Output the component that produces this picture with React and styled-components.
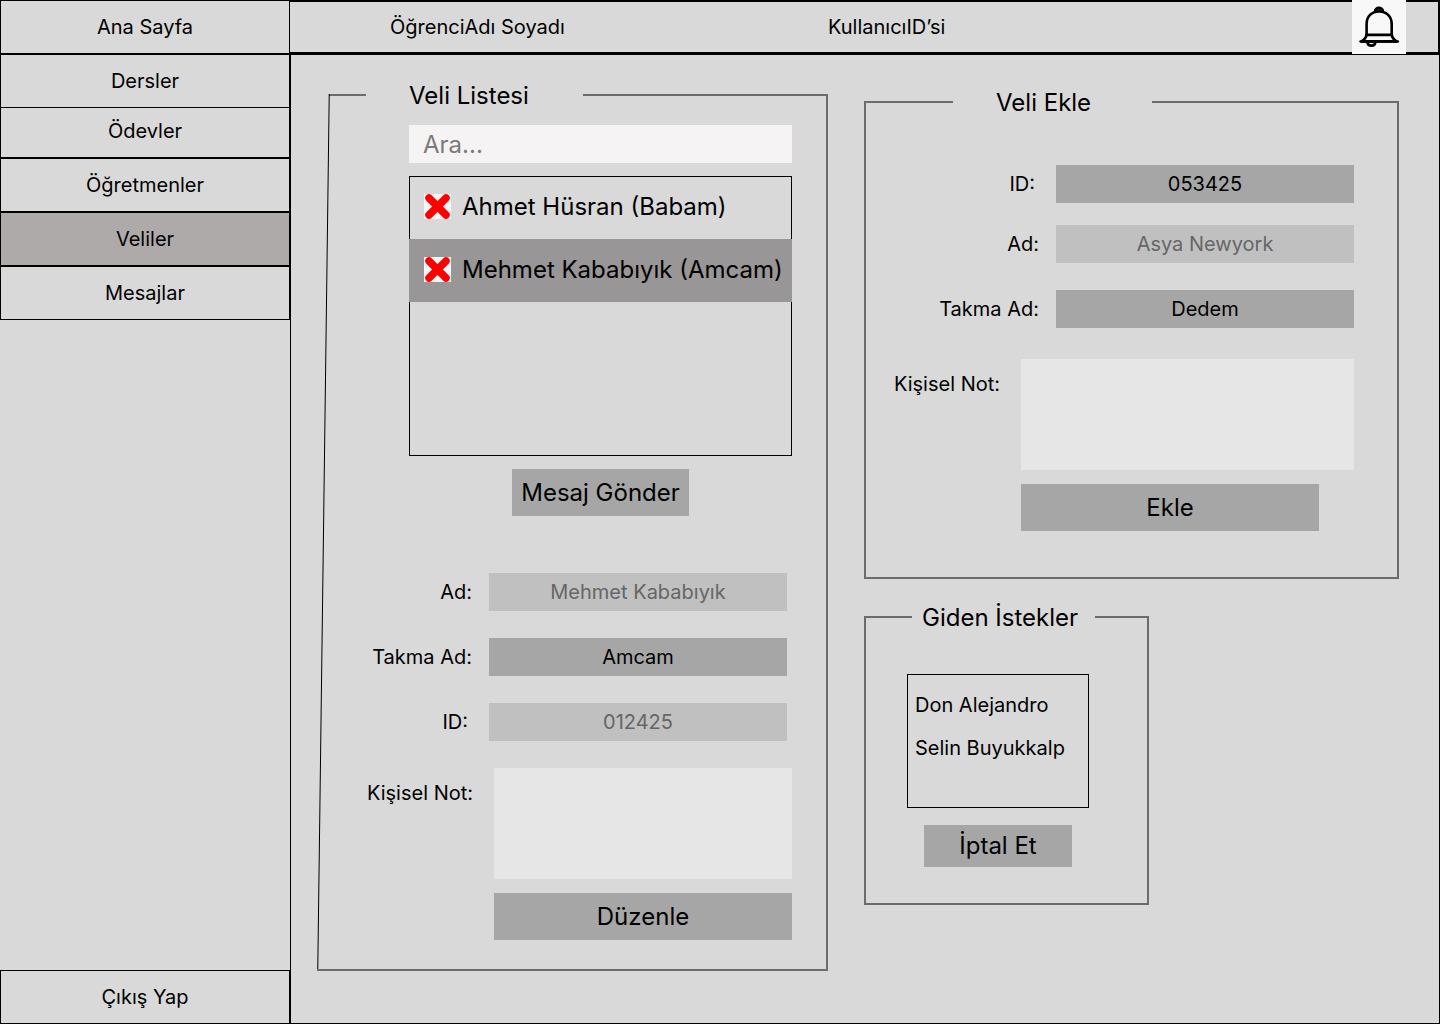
import React from "react";
import styled, { createGlobalStyle, css } from "styled-components";

const ink = "#000000";
const surface = "#d9d9d9";
const frameLine = "#6c6c6c";
const control = "#a6a6a6";
const controlMuted = "#c0c0c0";

const GlobalStyle = createGlobalStyle`
  *, *::before, *::after { box-sizing: border-box; }
  body {
    margin: 0;
    background: ${surface};
    color: ${ink};
    font-family: Inter, "Liberation Sans", sans-serif;
    font-size: 20px;
    line-height: 24px;
  }
  button, input, textarea {
    font: inherit;
    color: inherit;
    border: 0;
    border-radius: 0;
    margin: 0;
    padding: 0;
  }
  button { cursor: pointer; }
  ul { list-style: none; margin: 0; padding: 0; }
`;

const Page = styled.div`
  display: grid;
  grid-template-columns: 290px minmax(0, 1fr);
  min-height: 100vh;
`;

const Sidebar = styled.nav`
  display: flex;
  flex-direction: column;
  justify-content: space-between;
`;

const Menu = styled.ul`
  display: flex;
  flex-direction: column;
`;

const MenuItem = styled.li`
  /* The third entry is tucked under the second one. */
  &:nth-child(2) { z-index: 1; }
  &:nth-child(3) { margin-top: -4px; }
`;

const MenuLink = styled.a`
  display: flex;
  align-items: center;
  justify-content: center;
  height: 54px;
  border: 1px solid ${ink};
  background: ${(p) => (p.$active ? "#aeaaa9" : surface)};
  color: ${ink};
  text-decoration: none;
`;

const Workspace = styled.div`
  display: flex;
  flex-direction: column;
  min-width: 0;
`;

const TopBar = styled.header`
  display: grid;
  grid-template-columns: 438fr 524fr 54px;
  align-items: center;
  height: 55px;
  padding: 0 32px 0 100px;
  border: solid ${ink};
  border-width: 2px 2px 3px 0;
`;

const BellButton = styled.button`
  display: block;
  width: 54px;
  height: 54px;
  margin: -2px 0;
  background: #f8f8f8;
  svg { display: block; }
`;

const Content = styled.main`
  flex: 1;
  display: grid;
  grid-template-columns: minmax(0, 511fr) minmax(0, 535fr);
  align-items: start;
  gap: 36px;
  padding: 39px 40px 20px 26px;
  border: solid ${ink};
  border-width: 0 1px 1px 1px;
`;

const SideColumn = styled.div`
  display: flex;
  flex-direction: column;
  align-items: flex-start;
  gap: 37px;
  padding-top: 7px;
`;

const Frame = styled.section`
  position: relative;
  width: ${(p) => p.$width || "100%"};
  border: solid ${frameLine};
  border-width: 0 2px 2px ${(p) => (p.$slanted ? 0 : "2px")};

  ${(p) =>
    p.$slanted &&
    css`
      &::before {
        content: "";
        position: absolute;
        top: 0;
        bottom: 0;
        left: 6px;
        border-left: 1px solid ${ink};
        transform: skewX(-0.75deg);
        pointer-events: none;
      }
    `}
`;

const FrameHeader = styled.header`
  display: grid;
  grid-template-columns: ${(p) => p.$line}px ${(p) => p.$gap}px minmax(0, 1fr);
  align-items: center;
  height: 28px;
  margin-top: -13px;
  padding-left: ${(p) => (p.$slanted ? 12 : 0)}px;

  &::before, &::after {
    content: "";
    height: 2px;
    background: ${frameLine};
  }
`;

const FrameTitle = styled.h2`
  margin: 0;
  padding: 2px 0 0 ${(p) => p.$indent}px;
  font-size: 24px;
  font-weight: 400;
  line-height: 26px;
  white-space: nowrap;
`;

const FrameBody = styled.div`
  padding: ${(p) => p.$pad};
`;

const Picker = styled.div`
  display: flex;
  flex-direction: column;
  align-items: center;
  gap: 13px;
  padding-left: 92px;
`;

const SearchInput = styled.input`
  width: 100%;
  height: 38px;
  padding: 0 14px;
  background: #f5f3f4;
  font-size: 24px;
  &::placeholder { color: #7b7a7a; opacity: 1; }
`;

const ParentList = styled.ul`
  width: 100%;
  height: 280px;
  border: 1px solid ${ink};
`;

const ParentRow = styled.li`
  display: flex;
  align-items: center;
  gap: 11px;
  height: 63px;
  margin: 0 -1px;
  padding: 0 0 2px 15px;
  background: ${(p) => (p.$selected ? "#999697" : "transparent")};
  font-size: 24px;
  white-space: nowrap;
  &:first-child { margin-top: -1px; }
`;

const RemoveButton = styled.button`
  flex: none;
  width: 27px;
  height: 25px;
  background: #f6f6f6;
  svg { display: block; }
`;

const ActionButton = styled.button`
  width: ${(p) => p.$width}px;
  max-width: 100%;
  height: ${(p) => p.$height || 47}px;
  background: ${control};
  font-size: 24px;
  white-space: nowrap;
`;

const Form = styled.form`
  display: flex;
  flex-direction: column;
  margin-top: ${(p) => p.$top || 0}px;
`;

const FieldRow = styled.div`
  display: grid;
  grid-template-columns: ${(p) => p.$label}px minmax(0, 1fr);
  align-items: center;
  column-gap: 16px;
  margin-bottom: ${(p) => p.$after || 27}px;
  padding-right: ${(p) => p.$end || 0}px;
`;

const FieldLabel = styled.label`
  padding-right: ${(p) => p.$inset || 1}px;
  text-align: right;
  white-space: nowrap;
`;

const TextField = styled.input`
  width: 100%;
  height: 38px;
  text-align: center;
  background: ${control};
  &:disabled { background: ${controlMuted}; color: #666666; }
`;

const NoteGrid = styled.div`
  display: grid;
  grid-template-columns: ${(p) => p.$label}px minmax(0, 1fr);
  gap: 14px 20px;
  ${ActionButton} { grid-column: 2; }
`;

const NoteLabel = styled(FieldLabel)`
  padding-top: 13px;
`;

const NoteField = styled.textarea`
  display: block;
  width: 100%;
  height: 111px;
  padding: 8px;
  background: #e6e6e6;
  resize: none;
`;

const Requests = styled.div`
  display: flex;
  flex-direction: column;
  align-items: center;
  gap: 17px;
`;

const RequestList = styled.ul`
  width: 100%;
  height: 134px;
  padding: 9px 7px;
  border: 1px solid ${ink};
  line-height: 43px;
  white-space: nowrap;
`;

function BellIcon() {
  return (
    <svg width="54" height="54" viewBox="0 0 54 54" fill="none" stroke="#000" strokeWidth="2.6" strokeLinecap="round" strokeLinejoin="round" aria-hidden="true">
      <path d="M23 11.5a4 3.6 0 0 1 8 0" fill="#333" />
      <path d="M14.6 34.5V24c0-7.6 5-12.5 12.4-12.5S39.7 16.4 39.7 24v10.5c.3 3 2 5.200 5 6.900H9.400c3-1.700 4.900-3.900 5.200-6.900z" />
      <path d="M14.600 34.900h25.200" />
      <path d="M8.600 41.500h37.200" />
      <path d="M15.400 42.500c.6 4.200 7.400 4.200 8 0" />
    </svg>
  );
}

function CrossIcon() {
  return (
    <svg width="27" height="25" viewBox="0 0 27 25" fill="none" stroke="#ff0000" strokeWidth="7.5" strokeLinecap="round" aria-hidden="true">
      <path d="M5 4l17 17M22 4L5 21" />
    </svg>
  );
}

function Field({ id, label, value, disabled, ...layout }) {
  return (
    <FieldRow $label={layout.labelWidth} $after={layout.after} $end={layout.end}>
      <FieldLabel htmlFor={id} $inset={layout.inset}>{label}</FieldLabel>
      <TextField id={id} defaultValue={value} disabled={disabled} />
    </FieldRow>
  );
}

function Note({ id, labelWidth, action }) {
  return (
    <NoteGrid $label={labelWidth}>
      <NoteLabel htmlFor={id}>Kişisel Not:</NoteLabel>
      <NoteField id={id} />
      <ActionButton type="button" $width={298}>{action}</ActionButton>
    </NoteGrid>
  );
}

const menu = ["Ana Sayfa", "Dersler", "Ödevler", "Öğretmenler", "Veliler", "Mesajlar"];
const parents = [
  { name: "Ahmet Hüsran (Babam)" },
  { name: "Mehmet Kababıyık (Amcam)", selected: true },
];

export default function App() {
  return (
    <>
      <GlobalStyle />
      <Page lang="tr">
        <Sidebar>
          <Menu>
            {menu.map((name) => (
              <MenuItem key={name}>
                <MenuLink href="#" $active={name === "Veliler"}>{name}</MenuLink>
              </MenuItem>
            ))}
          </Menu>
          <MenuLink href="#">Çıkış Yap</MenuLink>
        </Sidebar>

        <Workspace>
          <TopBar>
            <span>ÖğrenciAdı Soyadı</span>
            <span>KullanıcıID’si</span>
            <BellButton type="button" aria-label="Bildirimler"><BellIcon /></BellButton>
          </TopBar>

          <Content>
            <Frame $slanted>
              <FrameHeader $line={37} $gap={217} $slanted>
                <FrameTitle $indent={43}>Veli Listesi</FrameTitle>
              </FrameHeader>
              <FrameBody $pad="16px 34px 29px 0">
                <Picker>
                  <SearchInput type="text" placeholder="Ara..." aria-label="Ara" />
                  <ParentList>
                    {parents.map((p) => (
                      <ParentRow key={p.name} $selected={p.selected}>
                        <RemoveButton type="button" aria-label="Sil"><CrossIcon /></RemoveButton>
                        <span>{p.name}</span>
                      </ParentRow>
                    ))}
                  </ParentList>
                  <ActionButton type="button" $width={177}>Mesaj Gönder</ActionButton>
                </Picker>
                <Form $top={57}>
                  <Field id="edit-name" label="Ad:" value="Mehmet Kababıyık" disabled labelWidth={156} end={5} />
                  <Field id="edit-alias" label="Takma Ad:" value="Amcam" labelWidth={156} end={5} />
                  <Field id="edit-id" label="ID:" value="012425" disabled labelWidth={156} end={5} inset={5} />
                  <Note id="edit-note" labelWidth={157} action="Düzenle" />
                </Form>
              </FrameBody>
            </Frame>

            <SideColumn>
              <Frame>
                <FrameHeader $line={87} $gap={199}>
                  <FrameTitle $indent={43}>Veli Ekle</FrameTitle>
                </FrameHeader>
                <FrameBody $pad="49px 43px 46px 0">
                  <Form>
                    <Field id="add-id" label="ID:" value="053425" labelWidth={174} after={22} inset={5} />
                    <Field id="add-name" label="Ad:" value="Asya Newyork" disabled labelWidth={174} />
                    <Field id="add-alias" label="Takma Ad:" value="Dedem" labelWidth={174} after={31} />
                    <Note id="add-note" labelWidth={135} action="Ekle" />
                  </Form>
                </FrameBody>
              </Frame>

              <Frame $width="285px">
                <FrameHeader $line={46} $gap={183}>
                  <FrameTitle $indent={10}>Giden İstekler</FrameTitle>
                </FrameHeader>
                <FrameBody $pad="43px 58px 36px 41px">
                  <Requests>
                    <RequestList>
                      <li>Don Alejandro</li>
                      <li>Selin Buyukkalp</li>
                    </RequestList>
                    <ActionButton type="button" $width={148} $height={42}>İptal Et</ActionButton>
                  </Requests>
                </FrameBody>
              </Frame>
            </SideColumn>
          </Content>
        </Workspace>
      </Page>
    </>
  );
}
